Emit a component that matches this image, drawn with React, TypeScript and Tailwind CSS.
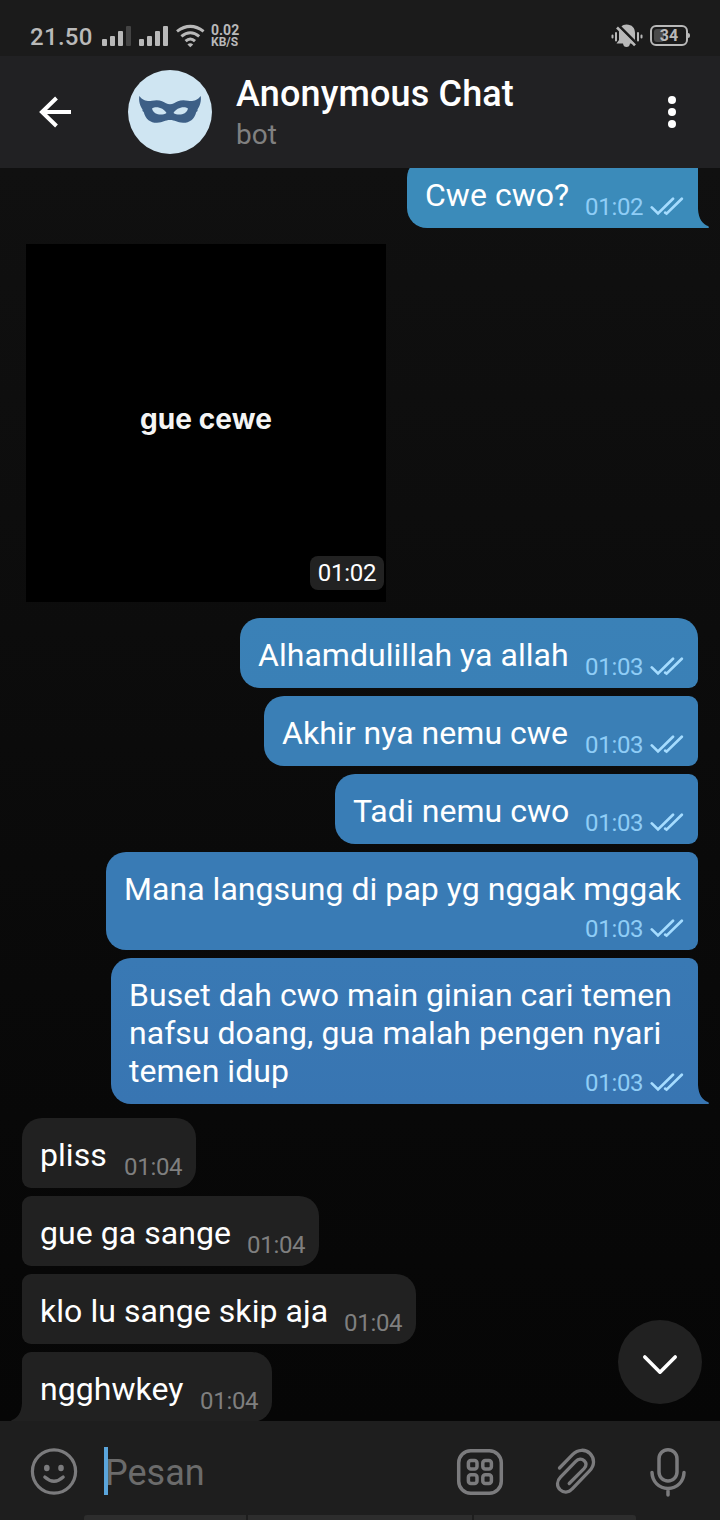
import React from "react";

type Shape = "first" | "middle" | "last";

function Checks() {
  return (
    <svg width="34" height="20" viewBox="0 0 34 20" fill="none" stroke="#a5dcff" strokeWidth="2.7" strokeLinecap="round">
      <path d="M1.8 10.4 L8 16.4 L23 1.8" />
      <path d="M15.2 15.6 L16.6 16.6 L31.8 1.8" />
    </svg>
  );
}

function OutTail({ color }: { color: string }) {
  return (
    <svg className="absolute bottom-0 left-full -ml-px" width="13" height="34" viewBox="0 0 13 34">
      <path d="M0 0 H1 V15 C1.5 25 6 30.500 11 32 Q13 33.4 11 34 H0 Z" fill={color} />
    </svg>
  );
}

function OutBubble({ children, time, box, shape, tail }: {
  children: React.ReactNode; time: string; box: string; shape: Shape; tail?: string;
}) {
  const corners = {
    first: "rounded-[20px] rounded-br-[9px]",
    middle: "rounded-l-[20px] rounded-r-[9px]",
    last: "rounded-l-[20px] rounded-tr-[9px] rounded-br-none",
  }[shape];
  return (
    <div className={`relative grid shrink-0 ${box} ${corners}`}>
      <p className="col-start-1 row-start-1 whitespace-nowrap pl-[18px] pt-[18px] text-[32px] leading-[38px] tracking-[0.04px] text-white">{children}</p>
      <div className="col-start-1 row-start-1 mb-[7px] flex h-7 items-center gap-[7px] self-end justify-self-end pr-[14px] text-[24px] leading-7 text-[#8fcdf6]">
        <span className="w-[58px] whitespace-nowrap tracking-[-0.3px]">{time}</span>
        <Checks />
      </div>
      {tail && <OutTail color={tail} />}
    </div>
  );
}

function InBubble({ text, box, shape }: { text: string; box: string; shape: Shape }) {
  const corners = {
    first: "rounded-[20px] rounded-bl-[9px]",
    middle: "rounded-r-[20px] rounded-l-[9px]",
    last: "rounded-r-[20px] rounded-tl-[9px]",
  }[shape];
  return (
    <div className={`relative flex h-[70px] shrink-0 items-end justify-between bg-[#212121] pl-[18px] pr-[14px] ${box} ${corners}`}>
      <p className="whitespace-nowrap pb-[14px] text-[32px] leading-[38px] tracking-[0.06px] text-white">{text}</p>
      <span className="w-[58px] whitespace-nowrap pb-[7px] text-[24px] leading-7 tracking-[-0.3px] text-[#7f7f7f]">01:04</span>
      {shape === "last" && (
        <svg className="absolute bottom-0 right-full -mr-px" width="13" height="34" viewBox="0 0 13 34">
          <path d="M13 0 H12 V15 C11.5 25 7 30.500 2 32 Q0 33.4 2 34 H13 Z" fill="#212121" />
        </svg>
      )}
    </div>
  );
}

function StatusBar() {
  return (
    <div className="flex h-14 items-start justify-between bg-[#1b1b1b] pl-[30px] pr-[30px] text-[#b9b9b9]">
      <div className="flex pt-[22px]">
        <span className="mt-px w-[72px] text-[24px] font-medium leading-7 tracking-[0.3px]">21.50</span>
        <svg width="104" height="28" viewBox="0 0 104 28" fill="#b9b9b9">
          <rect x="0" y="17" width="5" height="7" rx="1" />
          <rect x="8" y="14" width="5" height="10" rx="1" />
          <rect x="16" y="9" width="5" height="15" rx="1" />
          <rect x="24" y="4" width="5" height="20" rx="1" fill="#444" />
          <rect x="37" y="17" width="5" height="7" rx="1" />
          <rect x="45" y="14" width="5" height="10" rx="1" />
          <rect x="53" y="9" width="5" height="15" rx="1" />
          <rect x="61" y="4" width="5" height="20" rx="1" />
          <g fill="none" stroke="#b9b9b9" strokeWidth="3">
            <path d="M75 9.4 Q88.300 -.6 101.600 9.400" />
            <path d="M79.400 14.400 Q88.300 7 97.200 14.400" />
            <path d="M83.600 19.200 Q88.300 14.800 93 19.200" />
          </g>
          <path d="M85.400 22.400 Q88.300 20 91.200 22.400 L88.300 25.200Z" />
        </svg>
        <div className="ml-[5px] mt-[2px] font-bold">
          <div className="text-[14px] leading-[13px]">0.02</div>
          <div className="text-[12px] leading-[11px]">KB/S</div>
        </div>
      </div>
      <div className="flex gap-[7px] pt-[23px]">
        <svg width="32" height="26" viewBox="0 0 32 26">
          <g stroke="#b9b9b9" strokeWidth="2" strokeLinecap="round">
            <path d="M1.500 12.500V14.500M5 10V17.500M27 10V17.500M30.500 12.500V14.500" />
          </g>
          <path d="M15.500 1.500 C21 1.500 24 5 24 10 V17 L26 20.500 H19 Q18.500 24 15.500 24 Q12.500 24 12 20.500 H5.500 L8 17 V9.500 C8.300 5 11 1.500 15.500 1.500Z" fill="#b9b9b9" />
          <path d="M6.500 1.500 L27 22" stroke="#1b1b1b" strokeWidth="3" />
          <path d="M6 4.500 L24 22.300" stroke="#b9b9b9" strokeWidth="2.600" />
        </svg>
        <div className="mt-[2px] flex">
          <div className="relative flex h-[21px] w-[38px] items-center justify-center rounded-[6px] border-2 border-[#b9b9b9]">
            <div className="absolute left-[2px] top-[2px] h-[13px] w-[10px] rounded-[3px] bg-[#4a4a4a]" />
            <span className="relative mt-px text-[16px] font-bold leading-4">34</span>
          </div>
          <div className="mt-2 h-[5px] w-[2px] rounded-r bg-[#b9b9b9]" />
        </div>
      </div>
    </div>
  );
}

function Header() {
  return (
    <header className="flex h-28 bg-[#212123]">
      <svg className="ml-9 mt-9" width="40" height="40" viewBox="0 0 40 40" fill="none" stroke="white" strokeWidth="4">
        <path d="M35 20H6.500M20.500 6L6 20L20.500 34" />
      </svg>
      <div className="ml-[52px] mt-[14px] flex size-[84px] items-center justify-center rounded-full bg-[#cfe5f2]">
        <svg className="-mt-[4px]" width="64" height="30" viewBox="0 0 64 30">
          <path d="M1.300 1 C5 6 10 6.500 14 5.800 C21 4 25 6.500 28 8.300 Q32 10 36 8.300 C39 6.500 43 4 50 5.800 C54 6.500 59 6 62.700 1 C63.500 6 62 11 59.500 14.500 L59.500 16 L58.300 17 C56.500 24.500 51 28 45 27.800 C39 27.500 37 25 32 25 C27 25 25 27.500 19 27.800 C13 28 7.500 24.500 5.700 17 L4.500 16 L4.500 14.500 C2 11 .5 6 1.300 1Z" fill="#3d5f86" />
          <path d="M14 13.500 C18 10.500 26 13 28.500 18 C24 21 15.500 20 14 13.500ZM50 13.500 C46 10.500 38 13 35.500 18 C40 21 48.500 20 50 13.500Z" fill="#cfe5f2" />
        </svg>
      </div>
      <div className="ml-6 mt-[17px] flex flex-col">
        <h1 className="whitespace-nowrap text-[36px] font-medium leading-[42px] tracking-[0.150px] text-white">Anonymous Chat</h1>
        <span className="mt-[4px] text-[28px] leading-8 text-[#808080]">bot</span>
      </div>
      <svg className="ml-auto mr-[42px] mt-10" width="12" height="32" viewBox="0 0 12 32" fill="white">
        <circle cx="6" cy="4" r="4" />
        <circle cx="6" cy="16" r="4" />
        <circle cx="6" cy="28" r="4" />
      </svg>
    </header>
  );
}

function Composer() {
  return (
    <footer className="relative z-10 flex h-[99px] shrink-0 flex-col justify-between overflow-hidden bg-[#1e1e1e]">
      <div className="flex h-[94px]">
        <svg className="ml-[30px] mt-[27px]" width="48" height="48" viewBox="0 0 48 48" fill="none" stroke="#7b7b7d" strokeWidth="3.200" strokeLinecap="round">
          <circle cx="24" cy="23.500" r="21.600" />
          <path d="M14.800 29 Q24 37.500 33.200 29" />
          <ellipse cx="16.800" cy="20" rx="2.800" ry="3.300" fill="#7b7b7d" stroke="none" />
          <ellipse cx="31" cy="20" rx="2.800" ry="3.300" fill="#7b7b7d" stroke="none" />
        </svg>
        <div className="relative ml-[26px] mt-[26px] h-12 w-[340px]">
          <span className="block pl-[1px] pt-[5px] text-[36px] leading-[42px] text-[#6b6b6b]">Pesan</span>
          <span className="absolute left-0 top-0 h-12 w-1 bg-[#5aa5dc]" />
        </div>
        <svg className="ml-[12px] mt-[27px]" width="48" height="48" viewBox="0 0 48 48" fill="none" stroke="#7b7b7d" strokeWidth="3.500">
          <rect x="2.700" y="2.700" width="42.600" height="42.600" rx="12" />
          <rect x="12.400" y="12.400" width="8.600" height="8.600" rx="2.500" />
          <rect x="26.800" y="12.400" width="8.600" height="8.600" rx="2.500" />
          <rect x="12.400" y="26.800" width="8.600" height="8.600" rx="2.500" />
          <rect x="26.800" y="26.800" width="8.600" height="8.600" rx="2.500" />
        </svg>
        <svg className="ml-[51px] mt-[26px]" width="42" height="50" viewBox="0 0 42 50" fill="none" stroke="#7b7b7d" strokeWidth="3.300" strokeLinecap="round">
          <path d="M4.500 21 L17.500 7.700 C23 2 30.500 2 35 6.500 C39.800 11.300 39.800 18.500 34.500 23.800 L17 42 C13.500 46 8.500 46 5 42.600 C1.500 39 1.800 34 5.500 30.200 L20.500 14.600 C23.500 11.500 27 11.700 29.200 13.800 C31.500 16 31.500 19 29 21.700 L14.200 36.500" />
        </svg>
        <svg className="ml-[53px] mt-[26px]" width="36" height="50" viewBox="0 0 36 50" fill="none" stroke="#7b7b7d" strokeWidth="3.500" strokeLinecap="round">
          <rect x="9" y="2.700" width="18" height="31.300" rx="9" />
          <path d="M2 25.500 C2.200 34.500 9 41.500 18 41.500 C27 41.500 33.800 34.500 34 25.500 M18 42 V48" />
        </svg>
      </div>
      <div className="ml-[84px] flex h-[5px] w-[552px] gap-[2px] overflow-hidden rounded-t-[3px]">
        <div className="w-[162px] bg-[#2d2d2d]" />
        <div className="w-[224px] bg-[#2d2d2d]" />
        <div className="w-[162px] bg-[#2d2d2d]" />
      </div>
    </footer>
  );
}

export default function App() {
  return (
    <div className="flex h-[1520px] w-[720px] flex-col overflow-hidden bg-[#0a0a0a] font-['Roboto',sans-serif]">
      <StatusBar />
      <Header />
      <main className="relative flex h-[1253px] flex-col overflow-hidden bg-linear-to-b from-[#101010] to-[#060606]">
        <section className="-mt-[10px] flex flex-col items-end pr-[22px]">
          <OutBubble time="01:02" box="h-[70px] w-[291px] bg-[#3b8bba]" shape="last" tail="#3b8bba">Cwe cwo?</OutBubble>
        </section>
        <div className="ml-[26px] mt-4 grid h-[358px] w-[360px] shrink-0 bg-black">
          <span className="col-start-1 row-start-1 -mt-2 self-center justify-self-center whitespace-nowrap font-['Inter',sans-serif] text-[28px] font-bold leading-8 tracking-[0.1px] text-[#f4f4f4]">gue cewe</span>
          <span className="col-start-1 row-start-1 mb-3 mr-[2px] h-[34px] w-[74px] self-end justify-self-end rounded-lg bg-[#222] text-center text-[24px] leading-[34px] tracking-[-0.3px] text-white">01:02</span>
        </div>
        <section className="mt-4 flex flex-col items-end gap-2 pr-[22px]">
          <OutBubble time="01:03" box="h-[70px] w-[458px] bg-linear-to-b from-[#3a81b7] to-[#3a80b6]" shape="first">Alhamdulillah ya allah</OutBubble>
          <OutBubble time="01:03" box="h-[70px] w-[434px] bg-[#3a7fb6]" shape="middle">Akhir nya nemu cwe</OutBubble>
          <OutBubble time="01:03" box="h-[70px] w-[363px] bg-[#397db6]" shape="middle">Tadi nemu cwo</OutBubble>
          <OutBubble time="01:03" box="h-[98px] w-[592px] bg-[#397bb5]" shape="middle">Mana langsung di pap yg nggak mggak</OutBubble>
          <OutBubble time="01:03" box="h-[146px] w-[587px] bg-linear-to-b from-[#3979b4] to-[#3875b2]" shape="last" tail="#3875b2">
            Buset dah cwo main ginian cari temen<br />nafsu doang, gua malah pengen nyari<br />temen idup
          </OutBubble>
        </section>
        <section className="mt-[14px] flex flex-col items-start gap-2 pl-[22px]">
          <InBubble text="pliss" box="w-[174px]" shape="first" />
          <InBubble text="gue ga sange" box="w-[297px]" shape="middle" />
          <InBubble text="klo lu sange skip aja" box="w-[394px]" shape="middle" />
          <InBubble text="ngghwkey" box="w-[250px]" shape="last" />
        </section>
        <button className="absolute bottom-[17px] right-[18px] flex size-[84px] items-center justify-center rounded-full bg-[#212121]">
          <svg className="mt-[5px]" width="36" height="22" viewBox="0 0 36 22" fill="none" stroke="white" strokeWidth="3.600" strokeLinecap="round" strokeLinejoin="round">
            <path d="M2.800 3 L18 18.200 L33.200 3" />
          </svg>
        </button>
      </main>
      <Composer />
    </div>
  );
}
